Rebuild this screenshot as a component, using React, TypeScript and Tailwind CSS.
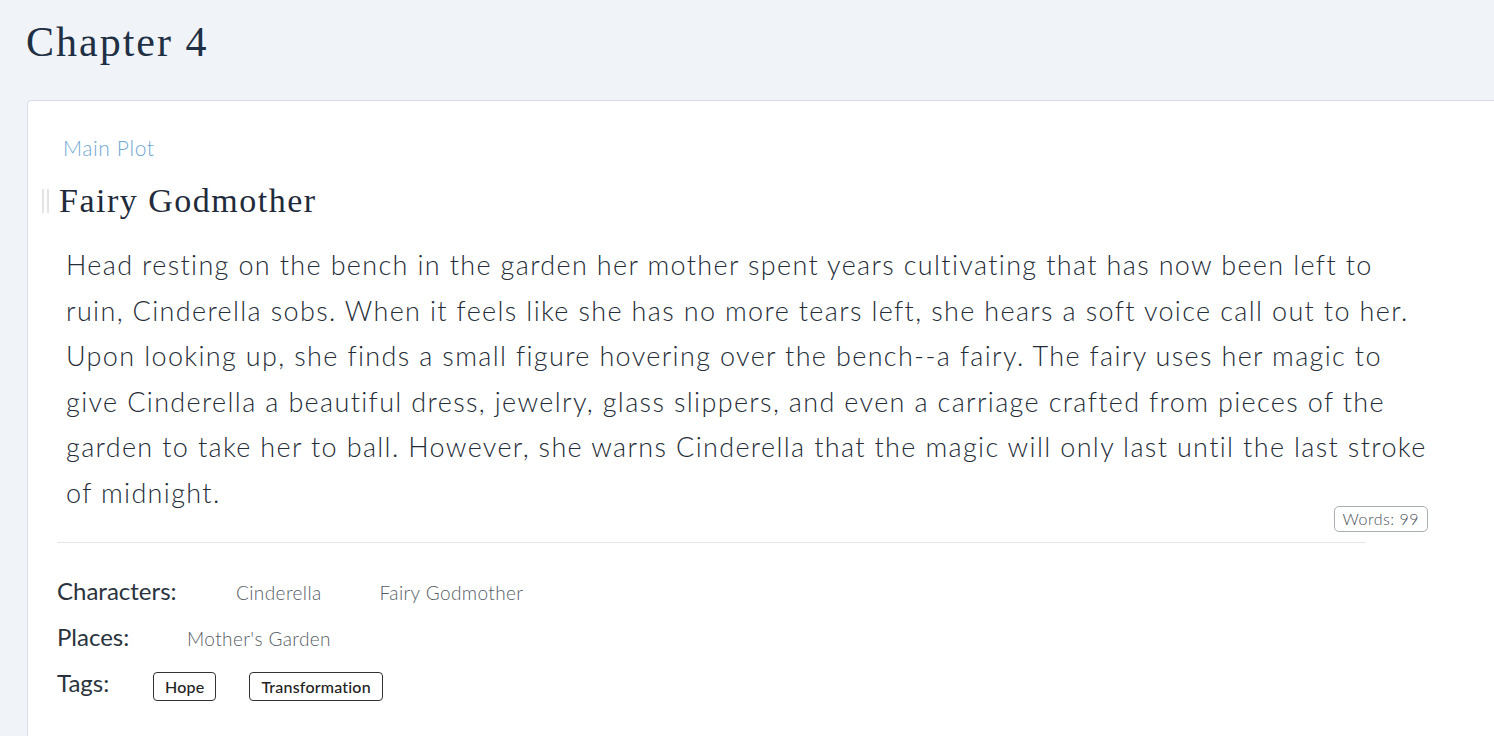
import React from "react";

const lines = [
  "Head resting on the bench in the garden her mother spent years cultivating that has now been left to",
  "ruin, Cinderella sobs. When it feels like she has no more tears left, she hears a soft voice call out to her.",
  "Upon looking up, she finds a small figure hovering over the bench--a fairy. The fairy uses her magic to",
  "give Cinderella a beautiful dress, jewelry, glass slippers, and even a carriage crafted from pieces of the",
  "garden to take her to ball. However, she warns Cinderella that the magic will only last until the last stroke",
  "of midnight.",
];

export default function App() {
  return (
    <div className="w-full h-[736px] overflow-hidden bg-[#f0f4f8] font-['Lato',sans-serif]">
      <div className="pl-[26px] pt-[16px] h-[100px]">
        <h1 className="font-['Liberation_Serif',serif] text-[42px] leading-[52px] tracking-[2px] text-[#1f3044]">Chapter 4</h1>
      </div>
      <div className="ml-[27px] mr-[-20px] bg-white border border-[#d6dde4] rounded-[4px] pl-[29px] pt-[33px] h-[700px]">
        <div className="pl-[6px] text-[21px] leading-[28px] tracking-[0.6px] text-[#6fa7d3] font-light">Main Plot</div>
        <div className="mt-[19px] -ml-[15px] flex items-center h-[40px]">
          <div className="flex gap-[3px] h-[24px] w-[8px] mr-[9px]">
            <div className="w-[2px] h-full bg-[#e2e4e6]" />
            <div className="w-[2px] h-full bg-[#e2e4e6]" />
          </div>
          <div className="font-['Liberation_Serif',serif] text-[34px] leading-[40px] tracking-[1.5px] text-[#1f2b3a]">Fairy Godmother</div>
        </div>
        <div className="mt-[21px] pl-[9px] text-[27px] leading-[45.6px] tracking-[1.35px] text-[#252d37] font-light">
          {lines.map((l) => (
            <span key={l} className="block whitespace-nowrap">{l}</span>
          ))}
        </div>
        <div className="w-[1371px] flex justify-end -mt-[10px]">
          <div className="h-[26px] px-[8px] border border-[#a8aeb4] rounded-[5px] text-[16px] leading-[24px] tracking-[0.5px] text-[#4a5058] font-light">Words: 99</div>
        </div>
        <div className="mt-[10px] w-[1309px] h-px bg-[#e2e6ea]" />
        <div className="mt-[34px] flex flex-col gap-[18px]">
          <div className="flex items-baseline h-[28px]">
            <span className="text-[24px] leading-[28px] text-[#2a333d] w-[179px] shrink-0">Characters:</span>
            <span className="text-[19px] tracking-[0.4px] text-[#565d65] font-light">Cinderella</span>
            <span className="ml-[58px] text-[19px] tracking-[0.4px] text-[#565d65] font-light">Fairy Godmother</span>
          </div>
          <div className="flex items-baseline h-[28px]">
            <span className="text-[24px] leading-[28px] text-[#2a333d] w-[130px] shrink-0">Places:</span>
            <span className="text-[19px] tracking-[0.4px] text-[#565d65] font-light">Mother's Garden</span>
          </div>
          <div className="flex items-center h-[28px]">
            <span className="text-[24px] leading-[28px] text-[#2a333d] w-[96px] shrink-0">Tags:</span>
            <span className="mt-[8px] h-[29px] px-[11px] border border-[#333] rounded-[4px] text-[16px] leading-[27px] tracking-[0.2px] text-[#222] font-medium">Hope</span>
            <span className="mt-[8px] ml-[33px] h-[29px] px-[11px] border border-[#333] rounded-[4px] text-[16px] leading-[27px] tracking-[0.2px] text-[#222] font-medium">Transformation</span>
          </div>
        </div>
      </div>
    </div>
  );
}
